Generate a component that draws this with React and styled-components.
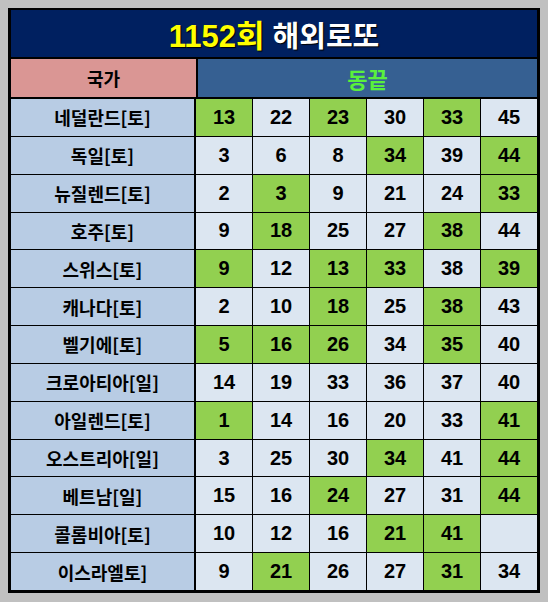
import React from 'react';
import styled, { createGlobalStyle } from 'styled-components';

const GlobalStyle = createGlobalStyle`
  html, body {
    margin: 0;
    padding: 0;
    background: #c0c0c0;
  }
  body {
    padding: 8px;
    font-family: "Liberation Sans", "Noto Sans CJK KR", sans-serif;
  }
`;

const rows = [
  ['네덜란드[토]', [13, 22, 23, 30, 33, 45], [13, 23, 33]],
  ['독일[토]', [3, 6, 8, 34, 39, 44], [34, 44]],
  ['뉴질렌드[토]', [2, 3, 9, 21, 24, 33], [3, 33]],
  ['호주[토]', [9, 18, 25, 27, 38, 44], [18, 38]],
  ['스위스[토]', [9, 12, 13, 33, 38, 39], [9, 13, 33, 39]],
  ['캐나다[토]', [2, 10, 18, 25, 38, 43], [18, 38]],
  ['벨기에[토]', [5, 16, 26, 34, 35, 40], [5, 16, 26, 35]],
  ['크로아티아[일]', [14, 19, 33, 36, 37, 40], []],
  ['아일렌드[토]', [1, 14, 16, 20, 33, 41], [1, 41]],
  ['오스트리아[일]', [3, 25, 30, 34, 41, 44], [34, 44]],
  ['베트남[일]', [15, 16, 24, 27, 31, 44], [24, 44]],
  ['콜롬비아[토]', [10, 12, 16, 21, 41, ''], [21, 41]],
  ['이스라엘토]', [9, 21, 26, 27, 31, 34], [21, 31]],
];

export default function App() {
  return (
    <>
      <GlobalStyle />
      <Board>
        <Title>
          <Round>1152회</Round> 해외로또
        </Title>
        <HeadRow>
          <HeadCountry>국가</HeadCountry>
          <HeadNumbers>동끝</HeadNumbers>
        </HeadRow>
        <Body>
          {rows.map(([country, nums, hits]) => (
            <Row key={country}>
              <Country>{country}</Country>
              {nums.map((n, i) => (
                <Num key={i} $hit={hits.includes(n)}>
                  {n}
                </Num>
              ))}
            </Row>
          ))}
        </Body>
      </Board>
    </>
  );
}

const Board = styled.div`
  box-sizing: border-box;
  width: 532px;
  height: 585px;
  border: 3px solid #000;
  border-top-width: 2px;
  background: #000;
  display: flex;
  flex-direction: column;
  gap: 2px;
`;

const Title = styled.div`
  height: 47px;
  background: #002060;
  color: #fff;
  display: flex;
  align-items: center;
  justify-content: center;
  font-size: 29px;
  font-weight: 700;
  text-shadow: 1px 1px 1px #000;
  white-space: pre;
`;

const Round = styled.span`
  color: #ffff00;
  font-size: 31px;
`;

const HeadRow = styled.div`
  height: 38px;
  display: grid;
  grid-template-columns: 185px 1fr;
  gap: 2px;
`;

const HeadCountry = styled.div`
  background: #da9694;
  display: flex;
  align-items: center;
  justify-content: center;
  font-family: "Noto Sans CJK KR", sans-serif;
  font-size: 18px;
  font-weight: 700;
  color: #000;
`;

const HeadNumbers = styled.div`
  background: #366092;
  display: flex;
  align-items: center;
  justify-content: center;
  font-family: "Noto Sans CJK KR", sans-serif;
  font-size: 22px;
  font-weight: 700;
  color: #5af03c;
`;

const Body = styled.div`
  flex: 1;
  display: flex;
  flex-direction: column;
  gap: 1px;
`;

const Row = styled.div`
  flex: 1;
  display: grid;
  grid-template-columns: 184px repeat(6, 1fr);
  gap: 1px;
`;

const Country = styled.div`
  background: #b8cce4;
  margin-right: 1px;
  display: flex;
  align-items: center;
  justify-content: center;
  font-family: "Noto Sans CJK KR", sans-serif;
  font-size: 18px;
  font-weight: 700;
  color: #000;
`;

const Num = styled.div`
  background: ${(p) => (p.$hit ? '#92d050' : '#dce6f1')};
  display: flex;
  align-items: center;
  justify-content: center;
  font-size: 20px;
  font-weight: 700;
  color: #000;
`;
